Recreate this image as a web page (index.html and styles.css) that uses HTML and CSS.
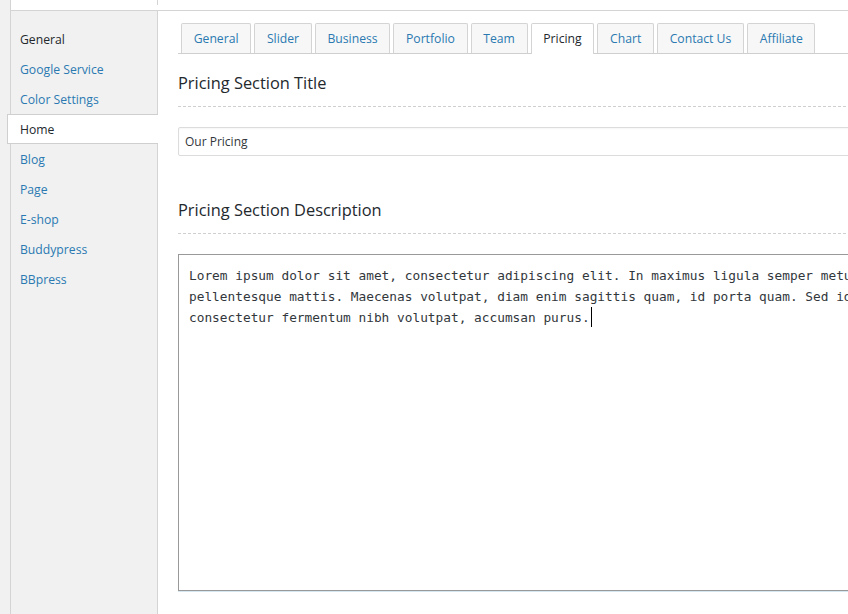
FILE: index.html
```html
<!DOCTYPE html>
<html>
<head>
<meta charset="utf-8">
<link rel="stylesheet" href="styles.css">
</head>
<body>
<div class="wrap">
  <div class="topbar"><div class="stub"></div></div>
  <div class="panel">
    <ul class="sidebar">
      <li class="item current">General</li>
      <li class="item">Google Service</li>
      <li class="item">Color Settings</li>
      <li class="item active">Home</li>
      <li class="item">Blog</li>
      <li class="item">Page</li>
      <li class="item">E-shop</li>
      <li class="item">Buddypress</li>
      <li class="item">BBpress</li>
    </ul>
    <div class="content">
      <div class="tabs">
        <span class="tab">General</span>
        <span class="tab">Slider</span>
        <span class="tab">Business</span>
        <span class="tab">Portfolio</span>
        <span class="tab">Team</span>
        <span class="tab tab-active">Pricing</span>
        <span class="tab">Chart</span>
        <span class="tab">Contact Us</span>
        <span class="tab">Affiliate</span>
      </div>
      <h2 class="section-title">Pricing Section Title</h2>
      <div class="input">Our Pricing</div>
      <h2 class="section-title second">Pricing Section Description</h2>
      <div class="textarea"><div class="line">Lorem ipsum dolor sit amet, consectetur adipiscing elit. In maximus ligula semper metus id</div><div class="line">pellentesque mattis. Maecenas volutpat, diam enim sagittis quam, id porta quam. Sed id</div><div class="line">consectetur fermentum nibh volutpat, accumsan purus.<span class="caret"></span></div></div>
    </div>
  </div>
</div>
</body>
</html>
```

FILE: styles.css
```css
html, body {
  margin: 0;
  padding: 0;
  overflow: hidden;
  height: 614px;
}
body {
  background: #f1f1f1;
  font-family: "Open Sans", "Noto Sans", sans-serif;
  color: #23282d;
}
.wrap {
  margin-left: 10px;
  border-left: 1px solid #d4d4d4;
  background: #fff;
  width: 900px;
}
.topbar {
  height: 10px;
  border-bottom: 1px solid #d4d4d4;
}
.stub {
  width: 146px;
  height: 5px;
  border-right: 1px solid #d4d4d4;
}
.panel {
  display: flex;
  height: 603px;
}
.sidebar {
  list-style: none;
  margin: 0;
  padding: 13px 0 0 0;
  width: 146px;
  flex: none;
  background: #f1f1f1;
  border-right: 1px solid #d4d4d4;
}
.item {
  height: 30px;
  line-height: 29px;
  padding-top: 1px;
  padding-left: 9px;
  font-size: 12.2px;
  color: #2a79b1;
  box-sizing: border-box;
}
.item.current {
  color: #23282d;
}
.item.active {
  color: #23282d;
  background: #fff;
  margin-left: -4px;
  margin-right: -1px;
  padding-left: 12px;
  padding-top: 0;
  border: 1px solid #cfcfcf;
  border-right: none;
  line-height: 29px;
}
.content {
  flex: 1;
  padding: 12px 0 0 20px;
  min-width: 0;
}
.tabs {
  display: flex;
  gap: 3px;
  padding-left: 3px;
  border-bottom: 1px solid #cfcfcf;
}
.tab {
  height: 30px;
  box-sizing: border-box;
  line-height: 30px;
  padding: 0 11.7px;
  border: 1px solid #d4d4d4;
  border-bottom: none;
  border-radius: 2px 2px 0 0;
  background: #f7f7f7;
  color: #2a79b1;
  font-size: 12.2px;
}
.tab-active {
  background: #fff;
  color: #23282d;
  height: 31px;
  margin-bottom: -1px;
}
.section-title {
  margin: 17px 0 0 0;
  font-weight: 400;
  font-size: 16.4px;
  line-height: 24px;
  padding-bottom: 11px;
  border-bottom: 1px dashed #cfcfcf;
  color: #23282d;
}
.section-title.second {
  margin-top: 42px;
}
.input {
  margin-top: 20px;
  height: 29px;
  box-sizing: border-box;
  border: 1px solid #dcdcdc;
  border-radius: 2px;
  padding-left: 6px;
  font-size: 12px;
  line-height: 27px;
  color: #32373c;
  box-shadow: inset 0 1px 2px rgba(0,0,0,0.04);
}
.textarea {
  margin-top: 20px;
  height: 337px;
  box-sizing: border-box;
  border: 1px solid #999;
  padding: 10px 10px;
  font-family: "DejaVu Sans Mono", "Liberation Mono", monospace;
  font-size: 12.8px;
  line-height: 21px;
  color: #32373c;
  box-shadow: 0 1px 0 #d6e7f2;
}
.line {
  white-space: nowrap;
  height: 21px;
}
.caret {
  display: inline-block;
  width: 1px;
  height: 20px;
  background: #000;
  vertical-align: -5px;
  margin-left: 1px;
}
```
